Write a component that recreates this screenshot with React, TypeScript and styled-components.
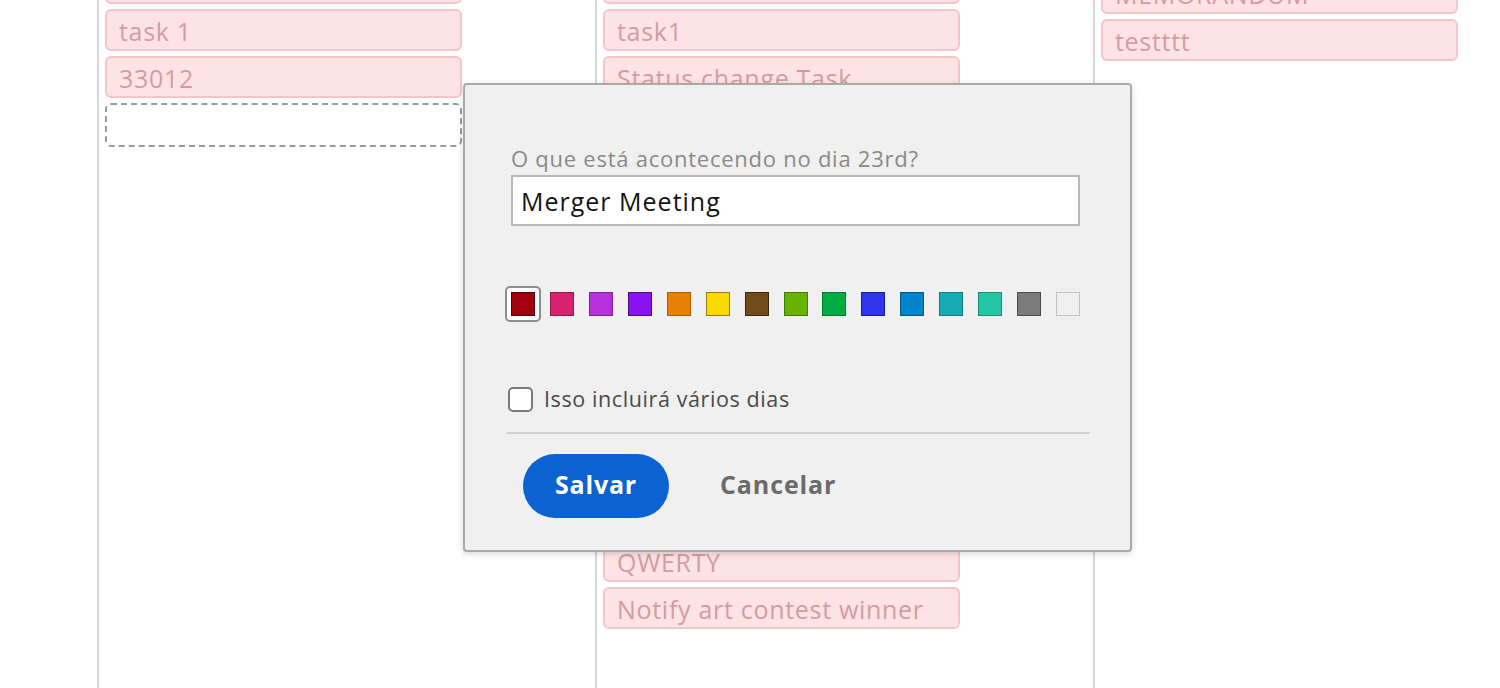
import React from "react";
import styled, { createGlobalStyle } from "styled-components";

const GlobalStyle = createGlobalStyle`
  html, body {
    margin: 0;
    padding: 0;
    background: #ffffff;
    overflow: hidden;
  }
  body {
    font-family: "Open Sans", "Lato", Arial, sans-serif;
  }
`;

const Page = styled.div`
  position: relative;
  width: 1500px;
  height: 688px;
  overflow: hidden;
  background: #ffffff;
`;

const Board = styled.div`
  display: flex;
  height: 688px;
  margin-left: -401px;
`;

const Column = styled.div`
  flex: 0 0 498px;
  box-sizing: border-box;
  border-left: 2px solid #d6d6d6;
  padding: 0 0 0 6px;
  overflow: hidden;
`;

const CardList = styled.div<{ $offset: number }>`
  display: flex;
  flex-direction: column;
  gap: 5px;
  margin-top: ${({ $offset }) => $offset}px;
`;

const Card = styled.div<{ $dashed?: boolean; $tall?: boolean }>`
  box-sizing: border-box;
  width: 357px;
  height: ${({ $tall, $dashed }) => ($tall ? 56 : $dashed ? 44 : 42)}px;
  border-radius: 6px;
  border: ${({ $dashed }) => ($dashed ? "2px dashed #9a9a9a" : "2px solid #f5c6c9")};
  background: ${({ $dashed }) => ($dashed ? "#ffffff" : "#fee3e5")};
  color: #d39ca3;
  font-size: 25px;
  letter-spacing: 0.7px;
  line-height: 40px;
  padding: 0 12px;
  white-space: nowrap;
  overflow: hidden;
`;

const Dialog = styled.div`
  position: absolute;
  left: 463px;
  top: 83px;
  width: 669px;
  height: 469px;
  box-sizing: border-box;
  background: #f0f0f0;
  border: 2px solid #a9a9a9;
  border-radius: 4px;
  box-shadow: 0 2px 6px rgba(0, 0, 0, 0.15);
  padding: 60px 41px 0 40px;
  display: flex;
  flex-direction: column;
`;

const Label = styled.label`
  display: block;
  margin-left: 6px;
  font-size: 22px;
  letter-spacing: 0.75px;
  line-height: 26px;
  color: #8a8a8a;
  white-space: nowrap;
`;

const TextInput = styled.input`
  box-sizing: border-box;
  margin: 4px 0 0 6px;
  width: 569px;
  height: 51px;
  border: 2px solid #b9b9b9;
  background: #ffffff;
  padding: 0 8px;
  font-family: inherit;
  font-size: 25px;
  letter-spacing: 1px;
  color: #141414;
  outline: none;
`;

const Swatches = styled.div`
  display: flex;
  align-items: center;
  margin-top: 60px;
  height: 36px;
`;

const SwatchSlot = styled.div<{ $selected?: boolean }>`
  box-sizing: border-box;
  width: 36px;
  height: 36px;
  margin-right: 3px;
  display: flex;
  align-items: center;
  justify-content: center;
  border-radius: 5px;
  border: 2px solid ${({ $selected }) => ($selected ? "#8e8e8e" : "transparent")};
  background: ${({ $selected }) => ($selected ? "#ffffff" : "transparent")};
`;

const Swatch = styled.div<{ $color: string; $edge: string }>`
  box-sizing: border-box;
  width: 24px;
  height: 24px;
  background: ${({ $color }) => $color};
  border: 1px solid ${({ $edge }) => $edge};
`;

const CheckRow = styled.label`
  display: flex;
  align-items: center;
  gap: 11px;
  margin: 64px 0 0 3px;
  font-size: 21.5px;
  letter-spacing: 0.6px;
  line-height: 26px;
  color: #4a4a4a;
  white-space: nowrap;
`;

const CheckBox = styled.span`
  box-sizing: border-box;
  flex: 0 0 25px;
  width: 25px;
  height: 25px;
  border: 2px solid #7a7a7a;
  border-radius: 5px;
  background: #ffffff;
`;

const Divider = styled.hr`
  width: 583px;
  margin: 20px 0 0 2px;
  border: none;
  border-top: 2px solid #d2d2d2;
`;

const Actions = styled.div`
  display: flex;
  align-items: center;
  gap: 51px;
  margin: 20px 0 0 18px;
`;

const PrimaryButton = styled.button`
  width: 146px;
  height: 64px;
  border: none;
  border-radius: 32px;
  background: #0b62d1;
  color: #ffffff;
  padding: 0 0 5px;
  font-family: inherit;
  font-weight: 700;
  font-size: 25px;
  letter-spacing: 0.8px;
  cursor: pointer;
`;

const TextButton = styled.button`
  border: none;
  background: none;
  padding: 0 0 5px;
  color: #6b6b6b;
  font-family: inherit;
  font-weight: 700;
  font-size: 25px;
  letter-spacing: 0.9px;
  cursor: pointer;
`;

const swatches: [string, string][] = [
  ["#a3000f", "#5c0008"],
  ["#d6226f", "#9a1650"],
  ["#b92fdb", "#7d1f95"],
  ["#8713f0", "#4d0a8a"],
  ["#e78000", "#b05f00"],
  ["#f8da00", "#9c7d00"],
  ["#704c1b", "#3a270d"],
  ["#66b300", "#3f7c00"],
  ["#00ad45", "#007a30"],
  ["#2e35ec", "#151a9a"],
  ["#0085cc", "#005a8a"],
  ["#17abb4", "#0d7c82"],
  ["#24c6a4", "#17927a"],
  ["#7b7b7b", "#4a4a4a"],
  ["#f0f0f0", "#c2c2c2"],
];

export default function App() {
  return (
    <Page>
      <GlobalStyle />
      <Board>
        <Column />
        <Column>
          <CardList $offset={-38}>
            <Card>Follow up call</Card>
            <Card>task 1</Card>
            <Card>33012</Card>
            <Card $dashed />
          </CardList>
        </Column>
        <Column>
          <CardList $offset={-38}>
            <Card>Review notes</Card>
            <Card>task1</Card>
            <Card>Status change Task</Card>
            <Card>Design review</Card>
            <Card>Team sync</Card>
            <Card>Budget draft</Card>
            <Card>Client call</Card>
            <Card>Weekly report</Card>
            <Card $tall>Launch plan</Card>
            <Card>Sprint demo</Card>
            <Card>Update docs</Card>
            <Card>Send invoices</Card>
            <Card>QWERTY</Card>
            <Card>Notify art contest winner</Card>
          </CardList>
        </Column>
        <Column>
          <CardList $offset={-28}>
            <Card>MEMORANDUM</Card>
            <Card>testttt</Card>
          </CardList>
        </Column>
      </Board>

      <Dialog>
        <Label htmlFor="event-title">O que está acontecendo no dia 23rd?</Label>
        <TextInput id="event-title" defaultValue="Merger Meeting" />
        <Swatches>
          {swatches.map(([c, e], i) => (
            <SwatchSlot key={c} $selected={i === 0}>
              <Swatch $color={c} $edge={e} />
            </SwatchSlot>
          ))}
        </Swatches>
        <CheckRow>
          <CheckBox />
          Isso incluirá vários dias
        </CheckRow>
        <Divider />
        <Actions>
          <PrimaryButton>Salvar</PrimaryButton>
          <TextButton>Cancelar</TextButton>
        </Actions>
      </Dialog>
    </Page>
  );
}
